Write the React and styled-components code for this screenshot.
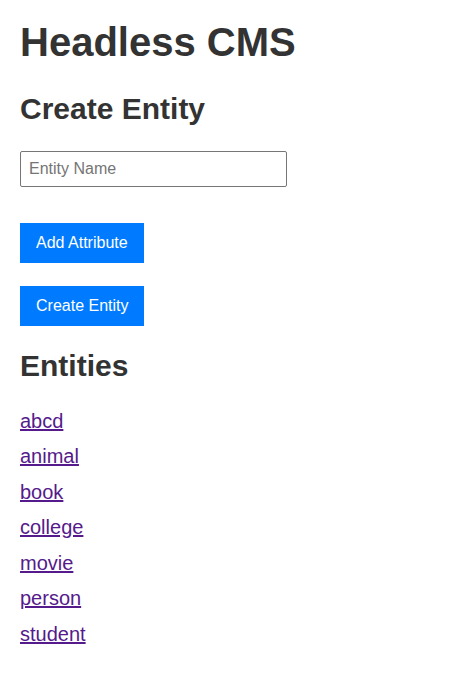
import React, { useState } from 'react'
import styled, { createGlobalStyle } from 'styled-components'

const GlobalStyle = createGlobalStyle`
  html, body {
    margin: 0;
    padding: 0;
    background: #ffffff;
  }

  body {
    font-family: 'Liberation Sans', Arial, sans-serif;
    color: #333333;
  }
`

const entities = ['abcd', 'animal', 'book', 'college', 'movie', 'person', 'student']

function App () {
  const [name, setName] = useState('')

  return (
    <Page>
      <GlobalStyle />
      <Title>Headless CMS</Title>

      <SectionTitle>Create Entity</SectionTitle>
      <NameInput
        type='text'
        placeholder='Entity Name'
        value={name}
        onChange={(event) => setName(event.target.value)}
      />
      <Actions>
        <Button type='button' $gap={36}>Add Attribute</Button>
        <Button type='button' $gap={23}>Create Entity</Button>
      </Actions>

      <SectionTitle $top={23}>Entities</SectionTitle>
      <List>
        {entities.map((entity) => (
          <ListItem key={entity}>
            <EntityLink href='#'>{entity}</EntityLink>
          </ListItem>
        ))}
      </List>
    </Page>
  )
}

const Page = styled.div`
  padding: 20px;
`

const Title = styled.h1`
  margin: 0;
  font-size: 40px;
  font-weight: bold;
  line-height: normal;
`

const SectionTitle = styled.h2`
  margin: ${(props) => props.$top || 26.5}px 0 0;
  font-size: 30px;
  font-weight: bold;
  line-height: normal;
`

const NameInput = styled.input`
  display: block;
  box-sizing: border-box;
  width: 267px;
  height: 36px;
  margin-top: 25px;
  padding: 8px;
  border: 1px solid #767676;
  border-radius: 2px;
  font-family: 'Liberation Sans', Arial, sans-serif;
  font-size: 16px;
  color: #333333;

  &::placeholder {
    color: #757575;
  }
`

const Actions = styled.div`
  display: flex;
  flex-direction: column;
  align-items: flex-start;
`

const Button = styled.button`
  margin-top: ${(props) => props.$gap}px;
  padding: 10px 15px;
  border: 1px solid #007bff;
  background: #007bff;
  color: #ffffff;
  font-family: 'Liberation Sans', Arial, sans-serif;
  font-size: 16px;
  line-height: normal;
  cursor: pointer;
`

const List = styled.ul`
  margin: 27px 0 0;
  padding: 0;
  list-style: none;
`

const ListItem = styled.li`
  font-size: 20px;
  line-height: 22px;
  margin-bottom: 13.5px;
`

const EntityLink = styled.a`
  color: #551a8b;
  text-decoration: underline;
`

export default App
